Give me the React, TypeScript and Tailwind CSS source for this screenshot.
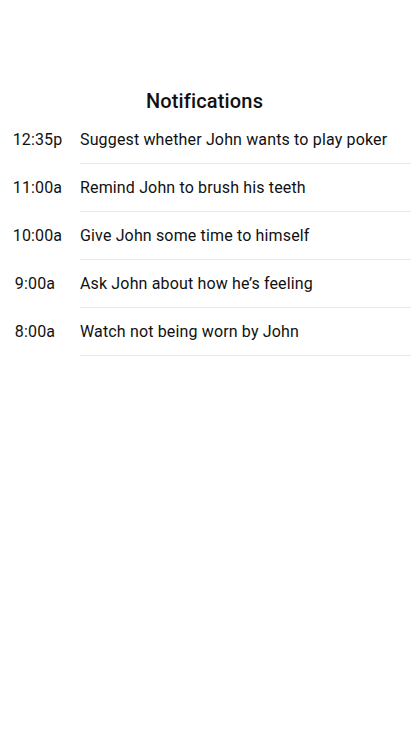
const items = [
  { time: "12:35p", text: "Suggest whether John wants to play poker", pad: "" },
  { time: "11:00a", text: "Remind John to brush his teeth", pad: "" },
  { time: "10:00a", text: "Give John some time to himself", pad: "" },
  { time: "9:00a", text: "Ask John about how he\u2019s feeling", pad: "pr-[5px]" },
  { time: "8:00a", text: "Watch not being worn by John", pad: "pr-[5px]" },
];

export default function App() {
  return (
    <div className="min-h-[731px] w-[411px] bg-white font-['Roboto',sans-serif] text-[#111]">
      <h1 className="pt-[87px] pr-[2px] text-center text-[20px] leading-[28px] font-medium tracking-[0.15px]">
        Notifications
      </h1>
      <ul className="pt-px">
        {items.map((n) => (
          <li key={n.time} className="flex h-12">
            <span className={`w-[75px] shrink-0 pt-[13px] text-center text-[16px] leading-[22px] tracking-[0.15px] ${n.pad}`}>
              {n.time}
            </span>
            <span className="ml-[5px] flex-1 border-b border-[#e8e8e8] pt-[13px] text-[16px] leading-[22px] tracking-[0.15px]">
              {n.text}
            </span>
          </li>
        ))}
      </ul>
    </div>
  );
}
